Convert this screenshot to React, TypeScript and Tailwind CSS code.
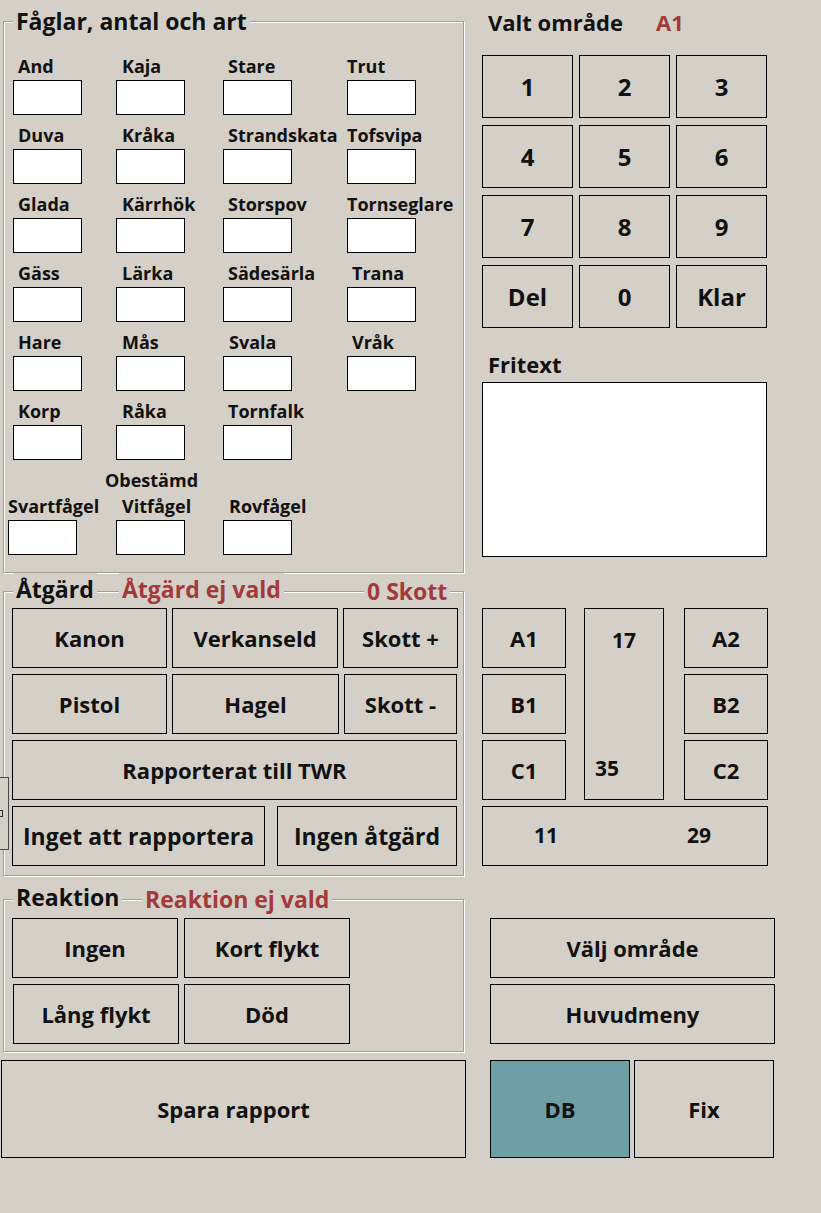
import React from 'react';

type Bird = { name: string; lp: string };

const COLS = ['w-[103px]', 'w-[107px]', 'w-[124px]', 'w-[90px]'];

const BIRD_ROWS: Bird[][] = [
    [{ name: 'And', lp: 'pl-[5px]' }, { name: 'Kaja', lp: 'pl-[6px]' }, { name: 'Stare', lp: 'pl-[5px]' }, { name: 'Trut', lp: 'pl-0' }],
    [{ name: 'Duva', lp: 'pl-[5px]' }, { name: 'Kråka', lp: 'pl-[6px]' }, { name: 'Strandskata', lp: 'pl-[5px]' }, { name: 'Tofsvipa', lp: 'pl-0' }],
    [{ name: 'Glada', lp: 'pl-[5px]' }, { name: 'Kärrhök', lp: 'pl-[6px]' }, { name: 'Storspov', lp: 'pl-[5px]' }, { name: 'Tornseglare', lp: 'pl-0' }],
    [{ name: 'Gäss', lp: 'pl-[5px]' }, { name: 'Lärka', lp: 'pl-[6px]' }, { name: 'Sädesärla', lp: 'pl-[5px]' }, { name: 'Trana', lp: 'pl-[5px]' }],
    [{ name: 'Hare', lp: 'pl-[5px]' }, { name: 'Mås', lp: 'pl-[6px]' }, { name: 'Svala', lp: 'pl-[6px]' }, { name: 'Vråk', lp: 'pl-[5px]' }],
    [{ name: 'Korp', lp: 'pl-[5px]' }, { name: 'Råka', lp: 'pl-[6px]' }, { name: 'Tornfalk', lp: 'pl-[5px]' }],
];

const Btn: React.FC<{ className?: string; children?: React.ReactNode }> = ({ className = '', children }) => (
    <button
        type="button"
        className={`flex items-center justify-center border border-black text-[22px] font-bold text-[#111] ${className}`}
    >
        {children}
    </button>
);

const Legend: React.FC<{ red?: boolean; children: React.ReactNode }> = ({ red, children }) => (
    <span
        className={`bg-[#d4d0c8] px-[3px] text-[23px] font-bold leading-[22px] whitespace-nowrap ${red ? 'text-[#a33a3a]' : 'text-[#111]'}`}
    >
        {children}
    </span>
);

const GroupBox: React.FC<{ header: React.ReactNode; className?: string; children: React.ReactNode }> = ({ header, className = '', children }) => (
    <div className={`ml-[3px] w-[461px] border border-[#a09d97] shadow-[inset_1px_1px_0_#fff,1px_1px_0_#fff] ${className}`}>
        <div className="-mt-[12px] flex h-[22px] items-center pl-[9px]">{header}</div>
        {children}
    </div>
);

const BirdCell: React.FC<{ bird: Bird; w: string }> = ({ bird, w }) => (
    <div className={`flex flex-col ${w}`}>
        <div className={`h-[20px] whitespace-nowrap text-[18px] font-bold leading-[20px] text-[#111] ${bird.lp}`}>{bird.name}</div>
        <div className="mt-[4px] h-[35px] w-[69px] border border-black bg-white" />
    </div>
);

export default function App() {
    return (
        <div className="relative flex h-[1213px] w-[821px] overflow-hidden bg-[#d4d0c8] font-['Open_Sans','Liberation_Sans',sans-serif] text-[#111]">
            {/* left column */}
            <div className="flex w-[466px] flex-col">
                <GroupBox className="mt-[21px]" header={<Legend>Fåglar, antal och art</Legend>}>
                    <div className="flex flex-col pb-[17px] pl-[9px] pt-[24px]">
                        <div className="flex flex-col gap-[10px]">
                            {BIRD_ROWS.map((row, i) => (
                                <div key={i} className="flex">
                                    {row.map((b, j) => (
                                        <BirdCell key={b.name} bird={b} w={COLS[j]} />
                                    ))}
                                </div>
                            ))}
                        </div>
                        <div className="mt-[10px] h-[20px] pl-[92px] text-[18px] font-bold leading-[20px]">Obestämd</div>
                        <div className="mt-[6px] flex">
                            <div className="-ml-[5px] w-[108px]">
                                <BirdCell bird={{ name: 'Svartfågel', lp: 'pl-0' }} w="w-[108px]" />
                            </div>
                            <BirdCell bird={{ name: 'Vitfågel', lp: 'pl-[6px]' }} w={COLS[1]} />
                            <BirdCell bird={{ name: 'Rovfågel', lp: 'pl-[6px]' }} w={COLS[2]} />
                        </div>
                    </div>
                </GroupBox>

                <GroupBox
                    className="mt-[18px]"
                    header={
                        <>
                            <div className="w-[106px]"><Legend>Åtgärd</Legend></div>
                            <div className="w-[245px]"><Legend red>Åtgärd ej vald</Legend></div>
                            <Legend red>0 Skott</Legend>
                        </>
                    }
                >
                    <div className="flex flex-col gap-[6px] pb-[9px] pl-[8px] pt-[6px]">
                        <div className="flex gap-[5px]">
                            <Btn className="h-[60px] w-[155px]">Kanon</Btn>
                            <Btn className="h-[60px] w-[166px]">Verkanseld</Btn>
                            <Btn className="h-[60px] w-[115px]">Skott +</Btn>
                        </div>
                        <div className="flex gap-[5px]">
                            <Btn className="h-[60px] w-[155px]">Pistol</Btn>
                            <Btn className="h-[60px] w-[167px]">Hagel</Btn>
                            <Btn className="h-[60px] w-[113px]">Skott -</Btn>
                        </div>
                        <Btn className="h-[60px] w-[445px]">Rapporterat till TWR</Btn>
                        <div className="flex gap-[12px]">
                            <Btn className="h-[60px] w-[253px] text-[23px]">Inget att rapportera</Btn>
                            <Btn className="h-[60px] w-[180px] text-[23px]">Ingen åtgärd</Btn>
                        </div>
                    </div>
                </GroupBox>

                <GroupBox
                    className="mt-[23px]"
                    header={
                        <>
                            <div className="w-[129px]"><Legend>Reaktion</Legend></div>
                            <Legend red>Reaktion ej vald</Legend>
                        </>
                    }
                >
                    <div className="flex flex-col gap-[6px] pb-[7px] pl-[8px] pt-[8px]">
                        <div className="flex gap-[6px]">
                            <Btn className="h-[60px] w-[166px]">Ingen</Btn>
                            <Btn className="h-[60px] w-[166px]">Kort flykt</Btn>
                        </div>
                        <div className="flex gap-[5px]">
                            <Btn className="ml-[1px] h-[60px] w-[166px]">Lång flykt</Btn>
                            <Btn className="h-[60px] w-[166px]">Död</Btn>
                        </div>
                    </div>
                </GroupBox>

                <Btn className="ml-[1px] mt-[8px] h-[98px] w-[465px]">Spara rapport</Btn>
            </div>

            {/* right column */}
            <div className="ml-[16px] flex w-[293px] flex-col">
                <div className="flex h-[44px] items-center">
                    <span className="w-[174px] pl-[6px] text-[22px] font-bold">Valt område</span>
                    <span className="text-[22px] font-bold text-[#a33a3a]">A1</span>
                </div>
                <div className="mt-[11px] grid grid-cols-[91px_91px_91px] gap-x-[6px] gap-y-[7px]">
                    {['1', '2', '3', '4', '5', '6', '7', '8', '9', 'Del', '0', 'Klar'].map(k => (
                        <Btn key={k} className="h-[63px] text-[24px]">{k}</Btn>
                    ))}
                </div>
                <div className="mt-[24px] h-[24px] pl-[6px] text-[22px] font-bold leading-[24px]">Fritext</div>
                <div className="mt-[6px] h-[175px] w-[285px] border border-black bg-white" />

                <div className="mt-[51px] flex">
                    <div className="flex w-[84px] flex-col gap-[6px]">
                        <Btn className="h-[60px] text-[21px]">A1</Btn>
                        <Btn className="h-[60px] text-[21px]">B1</Btn>
                        <Btn className="h-[60px] text-[21px]">C1</Btn>
                    </div>
                    <div className="ml-[18px] flex h-[192px] w-[80px] flex-col justify-between border border-black py-[19px] text-[21px] font-bold leading-[24px]">
                        <span className="text-center">17</span>
                        <span className="pl-[10px]">35</span>
                    </div>
                    <div className="ml-[20px] flex w-[84px] flex-col gap-[6px]">
                        <Btn className="h-[60px] text-[21px]">A2</Btn>
                        <Btn className="h-[60px] text-[21px]">B2</Btn>
                        <Btn className="h-[60px] text-[21px]">C2</Btn>
                    </div>
                </div>
                <div className="mt-[6px] flex h-[60px] w-[286px] items-center border border-black text-[21px] font-bold">
                    <span className="ml-[33px] w-[60px] text-center">11</span>
                    <span className="ml-[93px] w-[60px] text-center">29</span>
                </div>

                <Btn className="ml-[8px] mt-[52px] h-[60px] w-[285px]">Välj område</Btn>
                <Btn className="ml-[8px] mt-[6px] h-[60px] w-[285px]">Huvudmeny</Btn>
                <div className="ml-[8px] mt-[16px] flex gap-[4px]">
                    <Btn className="h-[98px] w-[140px] bg-[#6f9fa6]">DB</Btn>
                    <Btn className="h-[98px] w-[140px]">Fix</Btn>
                </div>
            </div>

            {/* partly hidden control at the left edge */}
            <div className="absolute left-0 top-[777px] flex h-[73px] w-[9px] items-center border border-l-0 border-[#4a4a4a] bg-[#d4d0c8]">
                <div className="h-[7px] w-[3px] border-y border-r border-[#333]" />
            </div>
        </div>
    );
}
